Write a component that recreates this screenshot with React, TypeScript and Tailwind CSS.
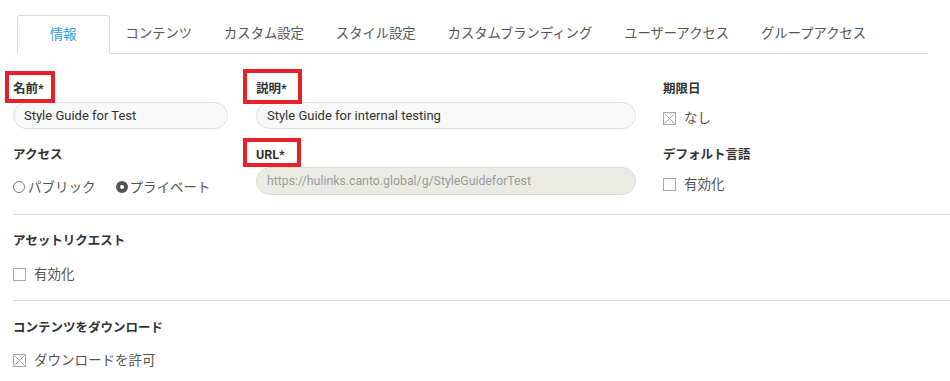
import React from "react";

const tabs = ["情報", "コンテンツ", "カスタム設定", "スタイル設定", "カスタムブランディング", "ユーザーアクセス", "グループアクセス"];

function Checkbox({ crossed = false }: { crossed?: boolean }) {
  return (
    <span className="w-[13px] h-[13px] border border-[#aba7a2] bg-white flex-shrink-0 flex items-center justify-center">
      {crossed && (
        <svg width="11" height="11" viewBox="0 0 11 11">
          <path d="M0.5 0.5 L10.5 10.5 M10.5 0.5 L0.5 10.5" stroke="#aba7a2" strokeWidth="1" />
        </svg>
      )}
    </span>
  );
}

function CheckRow({ label, crossed = false }: { label: string; crossed?: boolean }) {
  return (
    <div className="h-[17px] flex items-center gap-2 text-[13.5px] leading-[17px] text-[#555]">
      <Checkbox crossed={crossed} />
      <span>{label}</span>
    </div>
  );
}

function Label({ children }: { children: React.ReactNode }) {
  return <div className="h-[17px] text-[12.5px] leading-[17px] font-bold text-[#333]">{children}</div>;
}

export default function App() {
  return (
    <div className="relative w-[950px] h-[381px] bg-white overflow-hidden font-['Roboto','Noto_Sans_CJK_JP',sans-serif]">
      {/* Tabs */}
      <div className="pt-[15px] pl-[17px]">
        <div className="w-[911px] flex border-b border-[#dcdcdc]">
          {tabs.map((t, i) =>
            i === 0 ? (
              <div
                key={t}
                className="h-[39px] -mb-px px-8 flex items-center border border-[#dcdcdc] border-b-white bg-white rounded-t-[3px] text-[13.3px] text-[#1e9fe3]"
              >
                {t}
              </div>
            ) : (
              <div key={t} className="h-[38px] px-4 flex items-center text-[13.3px] text-[#555]">
                {t}
              </div>
            )
          )}
        </div>
      </div>

      {/* Fields */}
      <div className="pl-[13px]">
        <div className="mt-[26px] flex">
          <div className="w-[215px] flex flex-col">
            <Label>名前*</Label>
            <div className="mt-[5px] h-[27px] rounded-full border border-[#dedede] bg-[#f8f8f8] px-[10px] flex items-center text-[13px] text-[#333]">
              Style Guide for Test
            </div>
            <div className="mt-[17px]">
              <Label>アクセス</Label>
            </div>
            <div className="mt-[15px] h-[18px] flex items-center text-[13.5px] text-[#555]">
              <span className="w-[12px] h-[12px] rounded-full border-[1.5px] border-[#777] mr-[3px]" />
              <span>パブリック</span>
              <span className="ml-[20px] w-[12px] h-[12px] rounded-full bg-[#555] flex items-center justify-center mr-[2px]">
                <span className="w-[4px] h-[4px] rounded-full bg-white" />
              </span>
              <span>プライベート</span>
            </div>
          </div>

          <div className="ml-[28px] w-[380px] flex flex-col">
            <Label>説明*</Label>
            <div className="mt-[5px] h-[27px] rounded-full border border-[#dedede] bg-[#f8f8f8] px-[10px] flex items-center text-[13px] text-[#333]">
              Style Guide for internal testing
            </div>
            <div className="mt-[17px]">
              <Label>URL*</Label>
            </div>
            <div className="mt-[4px] h-[28px] rounded-full border border-[#dcdcd6] bg-[#ebebe6] px-[10px] flex items-center text-[12.3px] text-[#9a9a9a]">
              https://hulinks.canto.global/g/StyleGuideforTest
            </div>
          </div>

          <div className="ml-[27px] flex flex-col">
            <Label>期限日</Label>
            <div className="mt-[13px]">
              <CheckRow label="なし" crossed />
            </div>
            <div className="mt-[19px]">
              <Label>デフォルト言語</Label>
            </div>
            <div className="mt-[13px]">
              <CheckRow label="有効化" />
            </div>
          </div>
        </div>

        <div className="mt-[18px] h-px bg-[#dcdcdc]" />
        <div className="mt-[17px]">
          <Label>アセットリクエスト</Label>
        </div>
        <div className="mt-[17px]">
          <CheckRow label="有効化" />
        </div>

        <div className="mt-[17px] h-px bg-[#dcdcdc]" />
        <div className="mt-[18px]">
          <Label>コンテンツをダウンロード</Label>
        </div>
        <div className="mt-[16px]">
          <CheckRow label="ダウンロードを許可" crossed />
        </div>
      </div>

      {/* Annotation boxes */}
      <div className="absolute left-[5px] top-[71px] w-[50px] h-[32px] border-4 border-[#e8202a]" />
      <div className="absolute left-[243px] top-[69px] w-[59px] h-[35px] border-4 border-[#e8202a]" />
      <div className="absolute left-[243px] top-[138px] w-[58px] h-[29px] border-4 border-[#e8202a]" />
    </div>
  );
}
